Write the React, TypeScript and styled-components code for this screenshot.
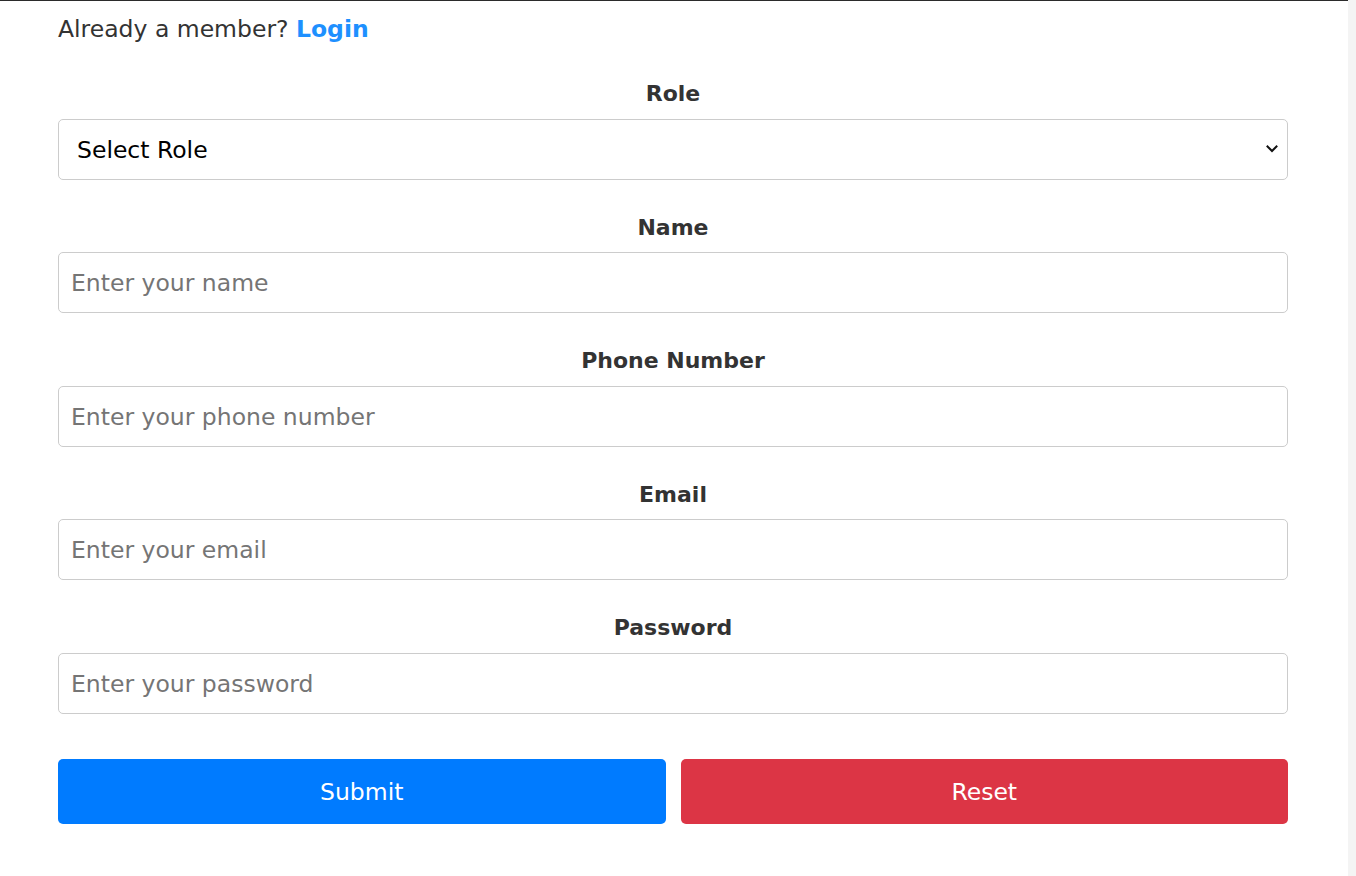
import { createGlobalStyle, styled } from 'styled-components';

const GlobalStyle = createGlobalStyle`
  html,
  body {
    margin: 0;
    padding: 0;
    background: #ffffff;
  }

  body {
    font-family: 'DejaVu Sans', 'Liberation Sans', sans-serif;
    color: #333333;
  }
`;

const fields = [
  { label: 'Name', placeholder: 'Enter your name', type: 'text' },
  { label: 'Phone Number', placeholder: 'Enter your phone number', type: 'tel' },
  { label: 'Email', placeholder: 'Enter your email', type: 'email' },
  { label: 'Password', placeholder: 'Enter your password', type: 'password' },
];

const ChevronIcon = () => (
  <svg width="12" height="8" viewBox="0 0 12 8" fill="none">
    <path d="M1.5 1.5L6 6l4.5-4.5" stroke="#111" strokeWidth="2" strokeLinecap="square" />
  </svg>
);

export default function App() {
  return (
    <>
      <GlobalStyle />
      <Page>
        <Main>
          <MemberLine>
            Already a member? <LoginLink href="#">Login</LoginLink>
          </MemberLine>
          <Form onSubmit={(e) => e.preventDefault()}>
            <FieldGroup>
              <Label htmlFor="role">Role</Label>
              <SelectWrap>
                <Select id="role" defaultValue="">
                  <option value="">Select Role</option>
                  <option value="user">User</option>
                  <option value="admin">Admin</option>
                </Select>
                <SelectArrow>
                  <ChevronIcon />
                </SelectArrow>
              </SelectWrap>
            </FieldGroup>
            {fields.map((field) => (
              <FieldGroup key={field.label}>
                <Label htmlFor={field.label}>{field.label}</Label>
                <Input id={field.label} type={field.type} placeholder={field.placeholder} />
              </FieldGroup>
            ))}
            <ButtonRow>
              <ActionButton type="submit" $variant="blue">
                Submit
              </ActionButton>
              <ActionButton type="reset" $variant="red">
                Reset
              </ActionButton>
            </ButtonRow>
          </Form>
        </Main>
        <ScrollTrack />
      </Page>
    </>
  );
}

const Page = styled.div`
  display: flex;
  min-height: 100vh;
`;

const Main = styled.main`
  flex: 1;
  box-sizing: border-box;
  border-top: 1px solid #2b2b2b;
  padding: 0 60px 0 58px;
`;

const ScrollTrack = styled.div`
  width: 8px;
  flex-shrink: 0;
  background: #f4f4f4;
`;

const MemberLine = styled.p`
  margin: 11px 0 0 0;
  font-size: 23.5px;
  line-height: 34px;
  color: #333333;
`;

const LoginLink = styled.a`
  color: #1e90ff;
  font-weight: 700;
  text-decoration: none;
`;

const Form = styled.form`
  display: flex;
  flex-direction: column;
  gap: 32px;
  margin-top: 32px;
`;

const FieldGroup = styled.div`
  display: flex;
  flex-direction: column;
`;

const Label = styled.label`
  display: block;
  text-align: center;
  font-size: 22px;
  font-weight: 700;
  line-height: 30px;
  padding-top: 1px;
  margin-bottom: 9.5px;
  color: #333333;
`;

const fieldBase = `
  width: 100%;
  height: 61px;
  box-sizing: border-box;
  border: 1px solid #cccccc;
  border-radius: 5px;
  background: #ffffff;
  font-family: 'DejaVu Sans', 'Liberation Sans', sans-serif;
  font-size: 23.5px;
  outline: none;
`;

const Input = styled.input`
  ${fieldBase}
  padding: 1px 12px 0 12px;
  color: #333333;

  &::placeholder {
    color: #757575;
  }
`;

const SelectWrap = styled.div`
  position: relative;
`;

const Select = styled.select`
  ${fieldBase}
  appearance: none;
  padding: 1px 40px 0 18px;
  color: #000000;
`;

const SelectArrow = styled.span`
  position: absolute;
  right: 10px;
  top: 50%;
  transform: translateY(-50%);
  display: flex;
  pointer-events: none;
`;

const ButtonRow = styled.div`
  display: grid;
  grid-template-columns: 1fr 1fr;
  gap: 15px;
  margin-top: 13px;
`;

const ActionButton = styled.button<{ $variant: 'blue' | 'red' }>`
  height: 65px;
  padding-top: 2px;
  border: none;
  border-radius: 5px;
  font-family: 'DejaVu Sans', 'Liberation Sans', sans-serif;
  font-size: 23.5px;
  color: #ffffff;
  background: ${({ $variant }) => ($variant === 'blue' ? '#007bff' : '#dc3545')};
  cursor: pointer;
`;
